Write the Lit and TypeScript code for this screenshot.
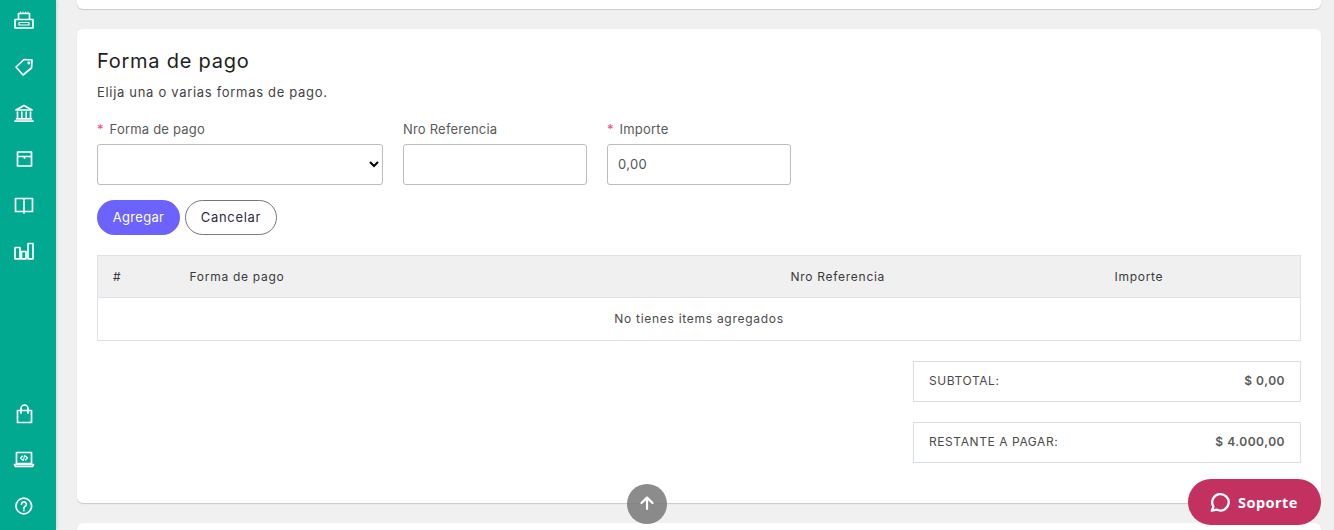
import { LitElement, html, css, svg } from "lit";
import { customElement } from "lit/decorators.js";

const icons = [
  svg`<path d="M6.500 10V4.500h11V10" /><path d="M8.500 4V3M11 4V3M13.500 4V3M16 4V3" stroke-width="1"/><path d="M3 10.500h18v8.500H3z" /><path d="M7 13.500h10v2.500H7z" stroke-width="1.200"/>`,
  svg`<path d="M4 12 12 4.500 20 5 19.500 13 11 20z" /><circle cx="16.800" cy="8" r=".6" />`,
  svg`<path d="M4 9 12 4.500 20 9zM5.500 11v6M9.800 11v6M14.200 11v6M18.500 11v6M4.500 17.800h15M3 20.200h18" />`,
  svg`<path d="M5.500 5h14v14h-14zM5.500 9.500h14M12.500 9.500v1.500" />`,
  svg`<path d="M3.500 5.500h17v13h-17z" /><path d="M12 5.500v14.500" stroke-dasharray="1.600 1.200" />`,
  svg`<path d="M3 8.500h5v11.300H3zM9.500 12.500h4.500v7.300H9.500zM16 4.500h5v15.300h-5z" />`,
];
const bottom = [
  svg`<path d="M5.500 8.500h14v12h-14zM9 11V6.500a3.500 3.500 0 0 1 7 0V11" />`,
  svg`<path d="M4.500 4.500h15v11h-15zM2.500 16.500h19l-1 2h-17z" /><path d="M10.500 8l-2 2 2 2M13.500 8l2 2-2 2M12.500 7.500l-1 5" stroke-width="1.100"/>`,
  svg`<circle cx="11.800" cy="12" r="7.800" /><path d="M9.500 10.300a2.400 2.400 0 1 1 3.600 2c-.8.500-1.200 1-1.200 1.900M11.900 16.200v.4" />`,
];

@customElement("app-root")
export class AppRoot extends LitElement {
  static styles = css`
    :host { display: block; width: 1334px; height: 530px; overflow: hidden; background: #f0f0f0; font-family: "Inter", "Open Sans", sans-serif; color: #2a2a2a; position: relative; }
    .layout { display: flex; height: 530px; }
    .side { width: 56px; flex: none; background: #00a98f; box-shadow: 1px 0 3px rgba(0,0,0,.12); display: flex; flex-direction: column; align-items: flex-start; justify-content: space-between; padding: 9px 0 12px 12px; box-sizing: border-box; }
    .group { display: flex; flex-direction: column; gap: 22px; }
    .side svg { display: block; width: 24px; height: 24px; fill: none; stroke: #fff; stroke-width: 1.700; stroke-linejoin: round; stroke-linecap: round; }
    .main { flex: 1; padding: 0 13px 0 21px; display: flex; flex-direction: column; gap: 20px; margin-top: -20px; min-width: 0; }
    .card { background: #fff; border-radius: 6px; box-shadow: 0 1px 1px rgba(0,0,0,.16); flex: none; }
    .stub { height: 29px; }
    .pay { padding: 19px 20px 20px; height: 474px; box-sizing: border-box; display: flex; flex-direction: column; }
    h2 { margin: 0; font-size: 20px; line-height: 26px; font-weight: 400; color: #1e1e1e; letter-spacing: .75px; }
    .sub { margin: 9px 0 0; font-size: 13px; line-height: 18px; letter-spacing: .69px; color: #444; }
    .fields { display: flex; gap: 20px; margin-top: 19px; }
    .field { display: flex; flex-direction: column; gap: 6px; }
    label { font-size: 13px; line-height: 18px; letter-spacing: .2px; color: #5a5a5a; }
    .req { color: #f0487f; margin-right: 2px; }
    .f1 { width: 286px; } .f2, .f3 { width: 184px; }
    input, select { box-sizing: border-box; width: 100%; height: 41px; border: 1px solid #bdbdbd; border-radius: 3px; background: #fff; font: inherit; font-size: 13px; color: #555; padding: 0 10px 2px; letter-spacing: .3px; outline: none; }
    select { color: #000; }
    .btns { display: flex; gap: 5px; margin-top: 15px; }
    button { height: 35px; border-radius: 18px; font: inherit; font-size: 13px; letter-spacing: .3px; padding: 0 0 2px; box-sizing: border-box; }
    .add { width: 83px; background: #6c63ff; color: #fff; border: 0; }
    .cancel { width: 92px; background: #fff; color: #332a45; border: 1px solid #777; letter-spacing: .7px; }
    table { border-collapse: collapse; width: 100%; margin-top: 20px; table-layout: fixed; font-size: 12px; letter-spacing: .72px; color: #3a3a3a; }
    th, td { border: 1px solid #dde2e8; font-weight: 400; }
    th { background: #f0f0f0; height: 41px; text-align: left; padding: 0; border-left: 0; border-right: 0; }
    th:first-child { border-left: 1px solid #dde2e8; padding-left: 15px; }
    th:last-child { border-right: 1px solid #dde2e8; }
    td { height: 43px; text-align: center; color: #4a4a4a; padding: 0 0 2px; box-sizing: border-box; }
    .summary { align-self: flex-end; width: 388px; display: flex; flex-direction: column; gap: 20px; margin-top: 20px; }
    .line { box-sizing: border-box; height: 41px; border: 1px solid #d9dfe6; display: flex; justify-content: space-between; align-items: center; padding: 0 15px 2px; font-size: 12px; letter-spacing: .58px; color: #4a4a4a; }
    .line b { font-weight: 600; color: #5a5a5a; letter-spacing: .5px; }
    .up { position: absolute; left: 627px; top: 484px; width: 40px; height: 40px; border-radius: 50%; background: rgba(120,120,120,.85); display: flex; align-items: center; justify-content: center; padding-bottom: 2px; box-sizing: border-box; }
    .up svg { width: 16px; height: 16px; fill: none; stroke: #fff; stroke-width: 2.200; stroke-linecap: round; stroke-linejoin: round; }
    .help { position: absolute; left: 1188px; top: 479px; width: 133px; height: 46px; border-radius: 23px; background: #c2315f; color: #fff; display: flex; align-items: center; padding-left: 21px; box-sizing: border-box; gap: 7px; font-size: 14.500px; font-weight: 700; font-family: "Noto Sans", sans-serif; letter-spacing: .45px; }
    .help svg { width: 22px; height: 22px; fill: none; stroke: #fff; stroke-width: 2.500; stroke-linecap: round; stroke-linejoin: round; }
  `;

  render() {
    const ic = (p: unknown) => html`<svg viewBox="0 0 24 24">${p}</svg>`;
    return html`
      <div class="layout">
        <nav class="side">
          <div class="group">${icons.map(ic)}</div>
          <div class="group">${bottom.map(ic)}</div>
        </nav>
        <main class="main">
          <div class="card stub"></div>
          <section class="card pay">
            <h2>Forma de pago</h2>
            <p class="sub">Elija una o varias formas de pago.</p>
            <div class="fields">
              <div class="field f1"><label><span class="req">*</span> Forma de pago</label><select></select></div>
              <div class="field f2"><label>Nro Referencia</label><input /></div>
              <div class="field f3"><label><span class="req">*</span> Importe</label><input value="0,00" /></div>
            </div>
            <div class="btns"><button class="add">Agregar</button><button class="cancel">Cancelar</button></div>
            <table>
              <colgroup><col style="width:92px"/><col style="width:601px"/><col style="width:324px"/><col /></colgroup>
              <thead><tr><th>#</th><th>Forma de pago</th><th>Nro Referencia</th><th>Importe</th></tr></thead>
              <tbody><tr><td colspan="4">No tienes items agregados</td></tr></tbody>
            </table>
            <div class="summary">
              <div class="line"><span>SUBTOTAL:</span><b>$ 0,00</b></div>
              <div class="line"><span>RESTANTE A PAGAR:</span><b>$ 4.000,00</b></div>
            </div>
          </section>
          <div class="card stub"></div>
        </main>
      </div>
      <div class="up"><svg viewBox="0 0 16 16"><path d="M8 14V2.500M2.500 8 8 2.500 13.500 8"/></svg></div>
      <div class="help"><svg viewBox="0 0 24 24"><path d="M3 21.500l1.800-4.500a9 9 0 1 1 3.500 3.300z"/></svg><span>Soporte</span></div>
    `;
  }
}
